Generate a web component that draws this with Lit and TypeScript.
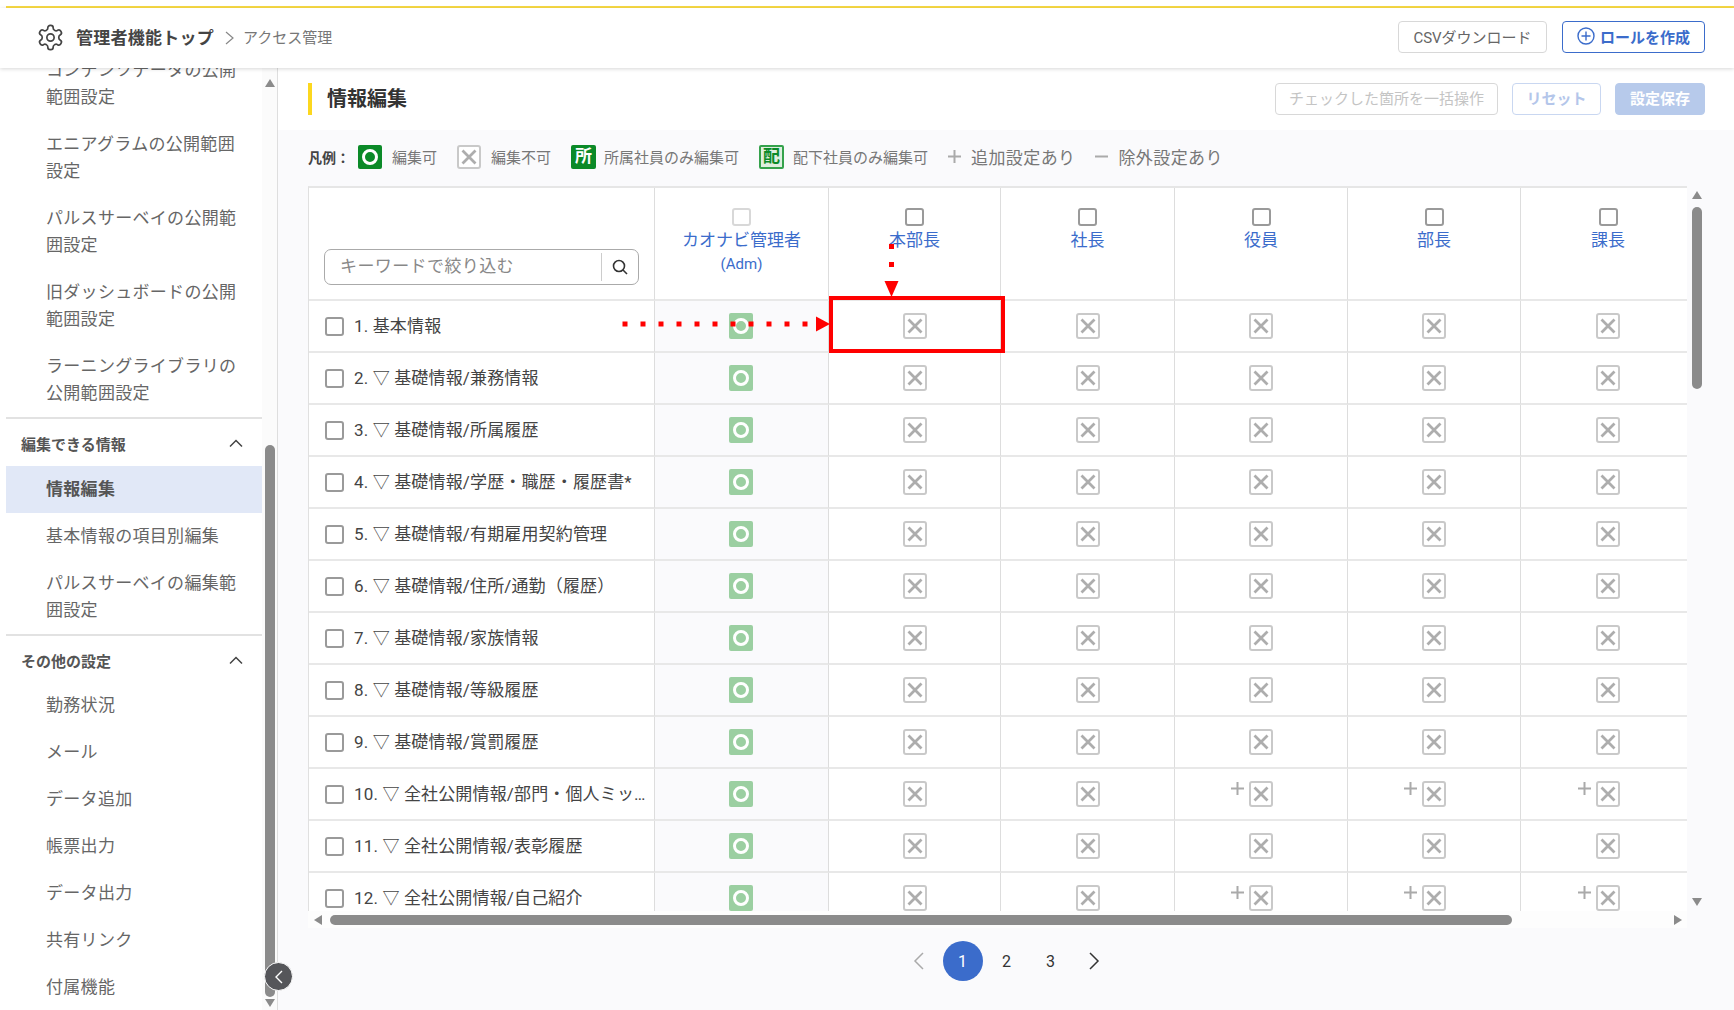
import { LitElement, html, css, svg } from 'lit';
import { customElement } from 'lit/decorators.js';

const ROLES = ['本部長', '社長', '役員', '部長', '課長'];
const ROWS = [
    '1. 基本情報',
    '2. ▽ 基礎情報/兼務情報',
    '3. ▽ 基礎情報/所属履歴',
    '4. ▽ 基礎情報/学歴・職歴・履歴書*',
    '5. ▽ 基礎情報/有期雇用契約管理',
    '6. ▽ 基礎情報/住所/通勤（履歴）',
    '7. ▽ 基礎情報/家族情報',
    '8. ▽ 基礎情報/等級履歴',
    '9. ▽ 基礎情報/賞罰履歴',
    '10. ▽ 全社公開情報/部門・個人ミッション',
    '11. ▽ 全社公開情報/表彰履歴',
    '12. ▽ 全社公開情報/自己紹介',
];
// rows (1-based) where the last three roles carry a "+" marker
const PLUS_ROWS = [10, 12];

const chevronUp = html`<svg width="18" height="18" viewBox="0 0 18 18" fill="none" stroke="#444" stroke-width="1.5"><path d="M3 12.5 L9 6.5 L15 12.5"/></svg>`;

const crossIcon = html`<svg class="mark" width="24" height="26" viewBox="0 0 24 26" fill="none">
    <rect x="1" y="1" width="22" height="24" rx="2" fill="#fff" stroke="#c9c9c9" stroke-width="2"/>
    <path d="M5.5 6.5 L18.5 19.5 M18.5 6.5 L5.5 19.5" stroke="#adadad" stroke-width="2.8"/>
</svg>`;

const circleIcon = html`<svg class="mark" width="24" height="26" viewBox="0 0 24 26" fill="none">
    <rect width="24" height="26" rx="2" fill="#9bcfa1"/>
    <circle cx="12" cy="13" r="6.5" stroke="#fff" stroke-width="3"/>
</svg>`;

@customElement('app-root')
export class AppRoot extends LitElement {
    static styles = css`
        :host {
            display: block;
            position: relative;
            width: 1734px;
            height: 1010px;
            overflow: hidden;
            background: #fff;
            font-family: Roboto, "Noto Sans CJK JP", sans-serif;
            font-size: 17px;
            color: #555;
        }

        .topline {
            height: 2px;
            margin: 6px 0 0 6px;
            background: #f7d944;
        }

        .header {
            position: relative;
            z-index: 2;
            display: flex;
            align-items: center;
            box-sizing: border-box;
            height: 60px;
            padding: 0 29px 2px 36px;
            box-shadow: 0 1px 4px rgba(0, 0, 0, 0.16);
            background: #fff;
        }
        .crumb-top {
            margin: 0 0 2px 11px;
            font-weight: 700;
            letter-spacing: 0.25px;
            color: #444;
        }
        .crumb-sep { margin: 0 9px 0 11px; display: flex; padding-top: 1px; }
        .crumb-now { font-size: 15px; color: #777; margin-bottom: 2px; }
        .spacer { flex: 1; }

        .btn {
            display: flex;
            align-items: center;
            justify-content: center;
            box-sizing: border-box;
            height: 32px;
            padding-bottom: 2px;
            border: 1px solid #d8d8d8;
            border-radius: 4px;
            font-size: 15px;
            background: #fff;
            color: #666;
        }
        .titlebar .btn { padding-bottom: 4px; }
        .btn.csv { width: 149px; margin-right: 15px; }
        .btn.create {
            width: 143px;
            gap: 5px;
            border: 1.5px solid #3b6ccb;
            color: #3b6ccb;
            font-weight: 700;
        }
        .btn.bulk { width: 223px; color: #c4c4c4; margin-right: 14px; }
        .btn.reset {
            width: 89px;
            margin-right: 14px;
            border-color: #c9d7f1;
            color: #b4c6ea;
            font-weight: 700;
        }
        .btn.save {
            width: 90px;
            border-color: #b7caeb;
            background: #b7caeb;
            color: #fff;
            font-weight: 700;
        }

        .body { display: flex; height: 942px; }

        .sidebar {
            display: flex;
            width: 278px;
            flex: none;
            box-sizing: border-box;
            border-right: 1px solid #dedede;
        }
        .side-list {
            width: 256px;
            margin-left: 6px;
            flex: none;
            overflow: hidden;
        }
        .side-inner { margin-top: -21px; }
        .side-item {
            padding: 10px 16px 10px 40px;
            line-height: 27px;
            letter-spacing: 0.3px;
            color: #666;
        }
        .side-item.active {
            background: #e1e8f7;
            font-weight: 700;
            color: #555;
        }
        .side-head {
            display: flex;
            align-items: center;
            justify-content: space-between;
            box-sizing: border-box;
            height: 46px;
            padding: 2px 17px 0 15px;
            font-size: 15px;
            font-weight: 700;
            color: #555;
        }
        .side-rule { height: 2px; background: #e2e2e2; }
        .side-head + .active { margin-top: 1px; }

        .side-track {
            display: flex;
            flex-direction: column;
            align-items: center;
            width: 15px;
            background: #fbfbfb;
        }
        .thumb-v { width: 10px; border-radius: 5px; background: #8b8b8b; }
        .arrow { width: 0; height: 0; border-style: solid; border-color: transparent; }
        .arrow.up { border-width: 0 5.5px 8px; border-bottom-color: #8b8b8b; }
        .arrow.down { border-width: 8px 5.5px 0; border-top-color: #8b8b8b; }
        .arrow.left { border-width: 5.5px 8px 5.5px 0; border-right-color: #8b8b8b; }
        .arrow.right { border-width: 5.5px 0 5.5px 8px; border-left-color: #8b8b8b; }

        .main { flex: 1; min-width: 0; display: flex; flex-direction: column; }

        .titlebar {
            display: flex;
            align-items: center;
            height: 62px;
            padding: 0 29px 0 30px;
            background: #fff;
        }
        .titlebar h1 {
            margin: 0;
            padding: 0 0 0 15px;
            height: 32px;
            line-height: 32px;
            border-left: 4px solid #fcd71f;
            font-size: 20px;
            font-weight: 700;
            color: #333;
        }

        .content {
            flex: 1;
            padding: 0 29px 0 30px;
            background: #fafafc;
        }

        .legend {
            display: flex;
            align-items: center;
            box-sizing: border-box;
            height: 56px;
            padding-bottom: 3px;
            font-size: 15px;
            color: #777;
        }
        .legend b { font-size: 14px; color: #444; width: 50px; }
        .legend .lab { margin-left: 10px; }
        .chip {
            display: flex;
            align-items: center;
            justify-content: center;
            box-sizing: border-box;
            width: 25px;
            height: 24px;
            border-radius: 2px;
            font-size: 17px;
            font-weight: 700;
            line-height: 1;
        }
        .chip.sho { background: #0b8a28; color: #fff; }
        .chip.hai {
            background: #deefe0;
            border: 2px solid #35a24c;
            color: #0b8a28;
        }
        .legend .more { font-size: 17px; margin-left: 10px; letter-spacing: 0.4px; }

        .table-area { display: flex; height: 725px; }
        .viewport {
            width: 1379px;
            flex: none;
            overflow: hidden;
            background: #fff;
            border-top: 2px solid #e6e6e6;
            border-left: 1px solid #e0e0e0;
            box-sizing: border-box;
        }
        .grid {
            display: grid;
            grid-template-columns: 346px 174px 172px 174px 173px 173px 174px;
            grid-template-rows: 113px;
            grid-auto-rows: 52px;
            width: 1386px;
        }
        .cell {
            position: relative;
            display: flex;
            align-items: center;
            justify-content: center;
            box-sizing: border-box;
            border-bottom: 2px solid #e8e8e8;
            border-right: 1px solid #dddddd;
        }
        .cell:nth-child(7n) { border-right: none; }
        .cell.adm { background: #fafafc; padding-right: 1px; }
        .cell.label {
            justify-content: flex-start;
            gap: 10px;
            padding: 0 2px 0 16px;
            color: #444;
        }
        .label span {
            padding-bottom: 3px;
            overflow: hidden;
            white-space: nowrap;
            text-overflow: ellipsis;
            letter-spacing: 0.15px;
        }
        .cell.head {
            flex-direction: column;
            justify-content: flex-start;
            padding-top: 20px;
            color: #3b6ccb;
            line-height: 24px;
            text-align: center;
        }
        .cell.head small { font-size: 15px; }
        .cell.search {
            align-items: flex-end;
            padding: 0 15px 14px 15px;
        }

        .box {
            display: block;
            flex: none;
            box-sizing: border-box;
            width: 19px;
            height: 19px;
            border: 2px solid #9a9a9a;
            border-radius: 3px;
            background: #fff;
        }
        .head .box { height: 18px; margin-bottom: 2px; }
        .box.off { border-color: #d8d8d8; }

        .searchbox {
            display: flex;
            align-items: center;
            box-sizing: border-box;
            width: 100%;
            height: 36px;
            border: 1.5px solid #aaa;
            border-radius: 7px;
            background: #fff;
        }
        .searchbox .ph {
            flex: 1;
            padding: 0 0 5px 15px;
            letter-spacing: 0.4px;
            color: #888;
        }
        .searchbox .go {
            display: flex;
            align-items: center;
            justify-content: center;
            width: 36px;
            height: 28px;
            border-left: 1px solid #ccc;
        }

        .plus {
            position: absolute;
            left: 50%;
            top: 50%;
            margin: -12px 0 0 -30px;
        }

        .track-v {
            flex: 1;
            display: flex;
            flex-direction: column;
            align-items: center;
            padding-top: 5px;
            margin-left: 2px;
            width: 10px;
        }
        .track-v .thumb-v { height: 182px; margin-top: 8px; margin-bottom: auto; }
        .track-v .arrow.down { margin-bottom: 5px; }

        .track-h {
            display: flex;
            align-items: center;
            width: 1379px;
            height: 17px;
            box-sizing: border-box;
            padding: 0 5px 0 6px;
            background: #fdfdfd;
        }
        .thumb-h {
            width: 1182px;
            height: 10px;
            margin: 0 auto 0 8px;
            border-radius: 5px;
            background: #8b8b8b;
        }

        .pager {
            display: flex;
            align-items: center;
            justify-content: center;
            height: 40px;
            margin-top: 13px;
            font-size: 16px;
            color: #333;
        }
        .pager > * {
            display: flex;
            align-items: center;
            justify-content: center;
            width: 44px;
            height: 40px;
        }
        .pager .cur {
            width: 40px;
            margin: 0 2px;
            border-radius: 50%;
            background: #3b6ccb;
            color: #fff;
        }

        .collapse {
            position: absolute;
            left: 264px;
            top: 962px;
            display: flex;
            align-items: center;
            justify-content: center;
            box-sizing: border-box;
            width: 29px;
            height: 29px;
            border-radius: 50%;
            border: 1px solid #fff;
            background: #55565a;
        }

        .marks {
            position: absolute;
            left: 0;
            top: 0;
            pointer-events: none;
        }
    `;

    private renderSideItem(text: string, active = false) {
        return html`<div class="side-item ${active ? 'active' : ''}">${text}</div>`;
    }

    private renderSidebar() {
        return html`
            <aside class="sidebar">
                <div class="side-list">
                    <div class="side-inner">
                        ${['コンテンツデータの公開範囲設定', 'エニアグラムの公開範囲設定', 'パルスサーベイの公開範囲設定', '旧ダッシュボードの公開範囲設定', 'ラーニングライブラリの公開範囲設定'].map((t) => this.renderSideItem(t))}
                        <div class="side-rule"></div>
                        <div class="side-head">編集できる情報 ${chevronUp}</div>
                        ${this.renderSideItem('情報編集', true)}
                        ${this.renderSideItem('基本情報の項目別編集')}
                        ${this.renderSideItem('パルスサーベイの編集範囲設定')}
                        <div class="side-rule"></div>
                        <div class="side-head">その他の設定 ${chevronUp}</div>
                        ${['勤務状況', 'メール', 'データ追加', '帳票出力', 'データ出力', '共有リンク', '付属機能'].map((t) => this.renderSideItem(t))}
                    </div>
                </div>
                <div class="side-track">
                    <i class="arrow up" style="margin-top:11px"></i>
                    <div class="thumb-v" style="height:552px;margin-top:358px"></div>
                    <i class="arrow down" style="margin-top:auto;margin-bottom:3px"></i>
                </div>
            </aside>
        `;
    }

    private renderLegend() {
        return html`
            <div class="legend">
                <b>凡例：</b>
                <svg width="24" height="24" viewBox="0 0 24 24" fill="none"><rect width="24" height="24" rx="2" fill="#0b8a28"/><circle cx="12" cy="12" r="6.5" stroke="#fff" stroke-width="3"/></svg>
                <span class="lab" style="margin-right:20px">編集可</span>
                <svg width="24" height="24" viewBox="0 0 24 24" fill="none"><rect x="1" y="1" width="22" height="22" rx="2" fill="#fff" stroke="#c9c9c9" stroke-width="2"/><path d="M5.5 5.5 L18.5 18.5 M18.5 5.5 L5.5 18.5" stroke="#adadad" stroke-width="2.8"/></svg>
                <span class="lab" style="margin-right:20px">編集不可</span>
                <span class="chip sho">所</span>
                <span class="lab" style="margin-left:8px;margin-right:20px">所属社員のみ編集可</span>
                <span class="chip hai">配</span>
                <span class="lab" style="margin-left:9px;margin-right:20px">配下社員のみ編集可</span>
                <svg width="13" height="13" viewBox="0 0 13 13" stroke="#aaa" stroke-width="2"><path d="M0 6.5 H13 M6.5 0 V13"/></svg>
                <span class="more" style="margin-right:20px">追加設定あり</span>
                <svg width="13" height="13" viewBox="0 0 13 13" stroke="#aaa" stroke-width="2"><path d="M0 6.5 H13"/></svg>
                <span class="more">除外設定あり</span>
            </div>
        `;
    }

    private renderGrid() {
        return html`
            <div class="grid">
                <div class="cell search">
                    <div class="searchbox">
                        <span class="ph">キーワードで絞り込む</span>
                        <span class="go">
                            <svg width="18" height="18" viewBox="0 0 18 18" fill="none" stroke="#333" stroke-width="1.6"><circle cx="8" cy="8" r="5.5"/><path d="M12 12 L16 16"/></svg>
                        </span>
                    </div>
                </div>
                <div class="cell head">
                    <i class="box off"></i>
                    <span>カオナビ管理者</span>
                    <small>(Adm)</small>
                </div>
                ${ROLES.map((r) => html`<div class="cell head"><i class="box"></i><span>${r}</span></div>`)}
                ${ROWS.map((label, i) => html`
                    <div class="cell label"><i class="box"></i><span>${label}</span></div>
                    <div class="cell adm">${circleIcon}</div>
                    ${ROLES.map((_, c) => html`
                        <div class="cell">
                            ${PLUS_ROWS.includes(i + 1) && c >= 2
                                ? html`<svg class="plus" width="13" height="13" viewBox="0 0 13 13" stroke="#aaa" stroke-width="2"><path d="M0 6.5 H13 M6.5 0 V13"/></svg>`
                                : ''}
                            ${crossIcon}
                        </div>
                    `)}
                `)}
            </div>
        `;
    }

    render() {
        return html`
            <div class="topline"></div>
            <header class="header">
                <svg width="29" height="29" viewBox="0 0 24 24" fill="none" stroke="#444" stroke-width="1.4" stroke-linejoin="round">
                    <path d="M12.22 2h-.44a2 2 0 0 0-2 2v.18a2 2 0 0 1-1 1.73l-.43.25a2 2 0 0 1-2 0l-.15-.08a2 2 0 0 0-2.73.73l-.22.38a2 2 0 0 0 .73 2.73l.15.1a2 2 0 0 1 1 1.72v.51a2 2 0 0 1-1 1.74l-.15.09a2 2 0 0 0-.73 2.73l.22.38a2 2 0 0 0 2.73.73l.15-.08a2 2 0 0 1 2 0l.43.25a2 2 0 0 1 1 1.73V20a2 2 0 0 0 2 2h.44a2 2 0 0 0 2-2v-.18a2 2 0 0 1 1-1.73l.43-.25a2 2 0 0 1 2 0l.15.08a2 2 0 0 0 2.73-.73l.22-.39a2 2 0 0 0-.73-2.73l-.15-.08a2 2 0 0 1-1-1.74v-.5a2 2 0 0 1 1-1.74l.15-.09a2 2 0 0 0 .73-2.73l-.22-.38a2 2 0 0 0-2.73-.73l-.15.08a2 2 0 0 1-2 0l-.43-.25a2 2 0 0 1-1-1.73V4a2 2 0 0 0-2-2z"/>
                    <circle cx="12" cy="12" r="3"/>
                </svg>
                <span class="crumb-top">管理者機能トップ</span>
                <span class="crumb-sep"><svg width="9" height="14" viewBox="0 0 9 14" fill="none" stroke="#888" stroke-width="1.2"><path d="M1 1 L8 7 L1 13"/></svg></span>
                <span class="crumb-now">アクセス管理</span>
                <div class="spacer"></div>
                <div class="btn csv">CSVダウンロード</div>
                <div class="btn create">
                    <svg width="18" height="18" viewBox="0 0 18 18" fill="none" stroke="#3b6ccb" stroke-width="1.4"><circle cx="9" cy="9" r="8"/><path d="M9 4.5 V13.5 M4.5 9 H13.5"/></svg>
                    ロールを作成
                </div>
            </header>
            <div class="body">
                ${this.renderSidebar()}
                <main class="main">
                    <div class="titlebar">
                        <h1>情報編集</h1>
                        <div class="spacer"></div>
                        <div class="btn bulk">チェックした箇所を一括操作</div>
                        <div class="btn reset">リセット</div>
                        <div class="btn save">設定保存</div>
                    </div>
                    <div class="content">
                        ${this.renderLegend()}
                        <div class="table-area">
                            <div class="viewport">${this.renderGrid()}</div>
                            <div class="track-v">
                                <i class="arrow up"></i>
                                <div class="thumb-v"></div>
                                <i class="arrow down"></i>
                            </div>
                        </div>
                        <div class="track-h">
                            <i class="arrow left"></i>
                            <div class="thumb-h"></div>
                            <i class="arrow right"></i>
                        </div>
                        <nav class="pager">
                            <span><svg width="11" height="18" viewBox="0 0 11 18" fill="none" stroke="#aaa" stroke-width="1.5"><path d="M10 1 L2 9 L10 17"/></svg></span>
                            <span class="cur">1</span>
                            <span>2</span>
                            <span>3</span>
                            <span><svg width="11" height="18" viewBox="0 0 11 18" fill="none" stroke="#333" stroke-width="1.5"><path d="M1 1 L9 9 L1 17"/></svg></span>
                        </nav>
                    </div>
                </main>
            </div>
            <div class="collapse">
                <svg width="10" height="14" viewBox="0 0 10 14" fill="none" stroke="#fff" stroke-width="1.4"><path d="M8 1 L2 7 L8 13"/></svg>
            </div>
            <svg class="marks" width="1734" height="1010" viewBox="0 0 1734 1010" fill="none">
                ${svg`
                    <rect x="831" y="298" width="172" height="53" stroke="#f00" stroke-width="4"/>
                    <path d="M622.5 324 H812" stroke="#f00" stroke-width="5" stroke-dasharray="5 13"/>
                    <path d="M830 324 L816 316.5 V331.5 Z" fill="#f00"/>
                    <path d="M891.5 244 V268" stroke="#f00" stroke-width="5" stroke-dasharray="5 13"/>
                    <path d="M891.5 297 L884.5 281 H898.5 Z" fill="#f00"/>
                `}
            </svg>
        `;
    }
}
